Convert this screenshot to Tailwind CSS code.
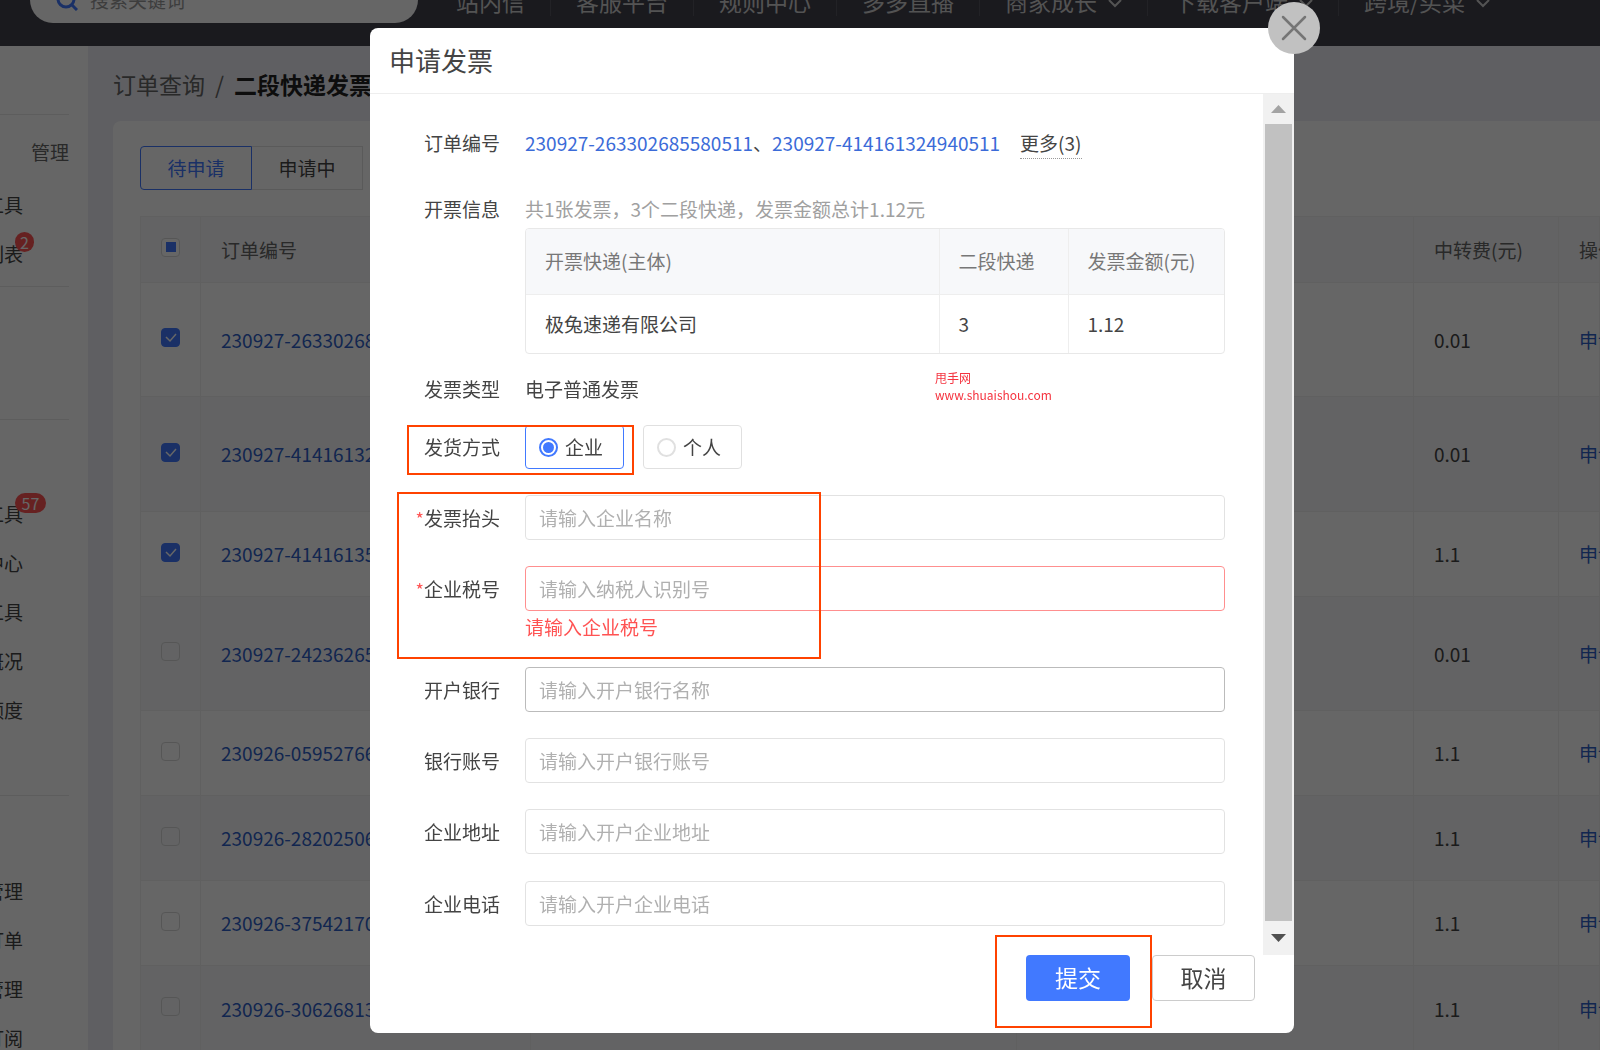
<!DOCTYPE html>
<html lang="zh-CN">
<head>
<meta charset="utf-8">
<meta name="viewport" content="width=device-width, initial-scale=1">
<title>申请发票</title>
<script src="https://cdn.jsdelivr.net/npm/@tailwindcss/browser@4"></script>
</head>
<body class="h-screen overflow-hidden bg-[#eeeef4] font-['Noto_Sans_CJK_SC',sans-serif] text-[19px] leading-[30px] text-[#444]">

<div class="flex h-screen flex-col overflow-hidden">
  <!-- Top bar -->
  <header class="flex h-[46px] shrink-0 items-end overflow-hidden bg-[#41414c] pl-[30px]">
    <label class="mb-[23px] flex h-[46px] w-[388px] shrink-0 items-center gap-[12px] rounded-full bg-white pl-[26px]">
      <svg class="size-[22px] shrink-0" viewBox="0 0 22 22" fill="none" stroke="#4179ff" stroke-width="3"><circle cx="10" cy="10" r="8"/><path d="M15.500 15.500L21 21"/></svg>
      <input type="search" aria-label="搜索" placeholder="搜索关键词" class="min-w-0 flex-1 bg-transparent placeholder:text-[#999]">
    </label>
    <nav class="mb-[30px] ml-[13px] flex shrink-0 text-[23px] text-[#d0d0d0]">
      <a href="#" class="border-r border-[#55555f] px-[25px]">站内信</a>
      <a href="#" class="border-r border-[#55555f] px-[25px]">客服平台</a>
      <a href="#" class="border-r border-[#55555f] px-[25px]">规则中心</a>
      <a href="#" class="border-r border-[#55555f] px-[25px]">多多直播</a>
      <a href="#" class="flex items-center gap-[11px] border-r border-[#55555f] px-[25px]">商家成长
        <svg class="mt-[4px] w-[14px]" viewBox="0 0 14 10" fill="none" stroke="currentColor" stroke-width="2"><path d="M1 2l6 6 6-6"/></svg></a>
      <a href="#" class="flex items-center gap-[11px] border-r border-[#55555f] px-[25px]">下载客户端
        <svg class="mt-[4px] w-[14px]" viewBox="0 0 14 10" fill="none" stroke="currentColor" stroke-width="2"><path d="M1 2l6 6 6-6"/></svg></a>
      <a href="#" class="flex items-center gap-[11px] px-[25px]">跨境/买菜
        <svg class="mt-[4px] w-[14px]" viewBox="0 0 14 10" fill="none" stroke="currentColor" stroke-width="2"><path d="M1 2l6 6 6-6"/></svg></a>
    </nav>
  </header>

  <div class="flex min-h-0 flex-1">
    <!-- Side menu -->
    <aside class="w-[88px] shrink-0 overflow-hidden bg-white pr-[19px] pt-[68px] leading-[49px] whitespace-nowrap">
      <div class="border-t border-[#e8e8e8] pt-[12px] pb-[4px] text-right text-[#666]">管理</div>
      <ul class="flex w-[23px] flex-col items-end pb-[8px]">
        <li><a href="#">营销工具</a></li>
        <li class="relative"><a href="#">活动列表</a><span class="absolute -right-[11px] top-[3px] flex h-[20px] w-[19px] items-center justify-center rounded-full bg-[#ff5353] text-[16px] leading-none text-white">2</span></li>
      </ul>
      <div class="h-[134px] border-y border-[#e8e8e8]"></div>
      <ul class="flex w-[23px] flex-col items-end pt-[69px] pb-[61px]">
        <li class="relative"><a href="#">推广工具</a><span class="absolute -right-[23px] top-[4px] flex h-[20px] w-[31px] items-center justify-center rounded-full bg-[#ff5353] text-[16px] leading-none text-white">57</span></li>
        <li><a href="#">数据中心</a></li>
        <li><a href="#">店铺工具</a></li>
        <li><a href="#">经营概况</a></li>
        <li><a href="#">账户额度</a></li>
      </ul>
      <div class="border-t border-[#e8e8e8]"></div>
      <ul class="flex w-[23px] flex-col items-end pt-[70px]">
        <li><a href="#">商品管理</a></li>
        <li><a href="#">服务订单</a></li>
        <li><a href="#">账号管理</a></li>
        <li><a href="#">消息订阅</a></li>
      </ul>
    </aside>

    <!-- Order list -->
    <main class="min-w-0 flex-1 pl-[25px]">
      <nav class="flex h-[75px] items-center gap-[10px] text-[23px] text-[#666]"><a href="#">订单查询</a><span>/</span><b class="text-[#222]">二段快递发票</b></nav>
      <section class="h-full rounded-tl-lg bg-white pl-[27px] pt-[25px]">
        <div class="flex h-[44px]">
          <button class="w-[112px] rounded-l border border-[#4179ff] text-[#4179ff]">待申请</button>
          <button class="w-[111px] border-y border-r border-[#e0e0e0]">申请中</button>
        </div>
        <table class="mt-[26px] w-full table-fixed border-collapse text-left whitespace-nowrap [&_td]:border [&_td]:border-[#f0f0f0] [&_td]:px-[20px] [&_th]:border [&_th]:border-[#f0f0f0] [&_th]:px-[20px] [&_th]:font-normal [&_th]:text-[#666] [&_input]:block [&_input]:size-[19px] [&_input]:appearance-none [&_input]:rounded-sm [&_input]:border [&_input]:border-[#d8d8d8] [&_input:checked]:border-[#4179ff] [&_input:checked]:bg-[#4179ff] [&_svg]:absolute [&_svg]:inset-0 [&_svg]:size-[19px] [&_label]:relative [&_label]:mb-[4px] [&_label]:block [&_a]:text-[#2f5fc8]">
          <colgroup><col class="w-[60px]"><col class="w-[330px]"><col><col class="w-[397px]"><col class="w-[145px]"><col class="w-[41px]"></colgroup>
          <thead>
            <tr class="h-[66px] bg-[#f7f8fa]"><th><label><input type="checkbox" aria-label="全选" class="bg-white"><span class="absolute left-[5px] top-[4px] size-[10px] bg-[#4179ff]"></span></label></th><th>订单编号</th><th></th><th></th><th>中转费(元)</th><th>操作</th></tr>
          </thead>
          <tbody>
            <tr class="h-[114px]"><td><label><input type="checkbox" checked aria-label="选择订单"><svg viewBox="0 0 19 19" fill="none" stroke="#fff" stroke-width="1.500"><path d="M5 9l4 4 6-7"/></svg></label></td><td><a href="#">230927-26330268</a></td><td></td><td></td><td>0.01</td><td><a href="#">申请</a></td></tr>
            <tr class="h-[115px] bg-[#f7f8fa]"><td><label><input type="checkbox" checked aria-label="选择订单"><svg viewBox="0 0 19 19" fill="none" stroke="#fff" stroke-width="1.500"><path d="M5 9l4 4 6-7"/></svg></label></td><td><a href="#">230927-41416132</a></td><td></td><td></td><td>0.01</td><td><a href="#">申请</a></td></tr>
            <tr class="h-[85px]"><td><label><input type="checkbox" checked aria-label="选择订单"><svg viewBox="0 0 19 19" fill="none" stroke="#fff" stroke-width="1.500"><path d="M5 9l4 4 6-7"/></svg></label></td><td><a href="#">230927-41416135</a></td><td></td><td></td><td>1.1</td><td><a href="#">申请</a></td></tr>
            <tr class="h-[114px] bg-[#f7f8fa]"><td><label><input type="checkbox" aria-label="选择订单"></label></td><td><a href="#">230927-24236265</a></td><td></td><td></td><td>0.01</td><td><a href="#">申请</a></td></tr>
            <tr class="h-[85px]"><td><label><input type="checkbox" aria-label="选择订单"></label></td><td><a href="#">230926-05952766</a></td><td></td><td></td><td>1.1</td><td><a href="#">申请</a></td></tr>
            <tr class="h-[85px] bg-[#f7f8fa]"><td><label><input type="checkbox" aria-label="选择订单"></label></td><td><a href="#">230926-28202506</a></td><td></td><td></td><td>1.1</td><td><a href="#">申请</a></td></tr>
            <tr class="h-[85px]"><td><label><input type="checkbox" aria-label="选择订单"></label></td><td><a href="#">230926-37542170</a></td><td></td><td></td><td>1.1</td><td><a href="#">申请</a></td></tr>
            <tr class="h-[86px] bg-[#f7f8fa]"><td><label><input type="checkbox" aria-label="选择订单"></label></td><td><a href="#">230926-30626813</a></td><td></td><td></td><td>1.1</td><td><a href="#">申请</a></td></tr>
          </tbody>
        </table>
      </section>
    </main>
  </div>
</div>

<!-- Invoice dialog -->
<div class="fixed inset-0 flex items-start justify-center bg-black/60 pt-[28px] pl-[64px]">
  <div role="dialog" aria-labelledby="dialog-title" class="relative flex w-[924px] flex-col rounded-lg bg-white">
    <h1 id="dialog-title" class="flex h-[66px] items-center border-b border-[#eee] px-[19px] pb-[2px] text-[26px]">申请发票</h1>
    <div class="flex">
      <form id="invoice" class="flex flex-1 flex-col pt-[34px] pr-[38px] pb-[29px]">
        <div class="flex gap-[25px]">
          <span class="w-[130px] text-right">订单编号</span>
          <div class="flex"><a href="#" class="text-[#3b6bd8]">230927-263302685580511</a>、<a href="#" class="text-[#3b6bd8]">230927-414161324940511</a><a href="#" class="ml-[20px] border-b border-dotted border-[#999]">更多(3)</a></div>
        </div>
        <div class="mt-[35px] flex gap-[25px]">
          <span class="w-[130px] text-right">开票信息</span>
          <div class="flex-1">
            <p class="text-[#a0a0a0]">共1张发票，3个二段快递，发票金额总计1.12元</p>
            <div class="mt-[4px] overflow-hidden rounded border border-[#e8e8e8]">
              <table class="w-full table-fixed text-left">
                <colgroup><col><col class="w-[129px]"><col class="w-[156px]"></colgroup>
                <thead><tr class="h-[65px] border-b border-[#eee] bg-[#f7f8fa] text-[#777]"><th class="px-[19px] font-normal">开票快递(主体)</th><th class="border-l border-[#eee] px-[19px] font-normal">二段快递</th><th class="border-l border-[#eee] px-[19px] font-normal">发票金额(元)</th></tr></thead>
                <tbody><tr class="h-[59px]"><td class="px-[19px]">极兔速递有限公司</td><td class="border-l border-[#eee] px-[19px]">3</td><td class="border-l border-[#eee] px-[19px]">1.12</td></tr></tbody>
              </table>
            </div>
          </div>
        </div>
        <div class="mt-[20px] flex gap-[25px]"><span class="w-[130px] text-right">发票类型</span><span>电子普通发票</span></div>
        <div role="radiogroup" aria-labelledby="mode" class="mt-[21px] flex items-center gap-[25px]">
          <span id="mode" class="w-[130px] text-right">发货方式</span>
          <div class="flex gap-[19px]">
            <label class="flex h-[44px] w-[99px] items-center gap-[7px] rounded border border-[#4179ff] pl-[13px]"><input type="radio" name="kind" checked class="size-[19px] appearance-none rounded-full border-2 border-[#4179ff] p-[2px] checked:bg-[#4179ff] bg-clip-content">企业</label>
            <label class="flex h-[44px] w-[99px] items-center gap-[7px] rounded border border-[#e0e0e0] pl-[13px]"><input type="radio" name="kind" class="size-[19px] appearance-none rounded-full border-2 border-[#e0e0e0]">个人</label>
          </div>
        </div>
        <div class="mt-[26px] flex items-center gap-[25px]"><label for="f1" class="w-[130px] text-right"><span class="text-[18px] leading-none text-[#ff5353]">*</span>发票抬头</label><input id="f1" placeholder="请输入企业名称" class="h-[45px] min-w-0 flex-1 rounded border border-[#e2e2e2] px-[13px] placeholder:text-[#b0b0b0]"></div>
        <div class="mt-[26px] flex items-center gap-[25px]"><label for="f2" class="w-[130px] text-right"><span class="text-[18px] leading-none text-[#ff5353]">*</span>企业税号</label><input id="f2" placeholder="请输入纳税人识别号" aria-describedby="f2-error" class="h-[45px] min-w-0 flex-1 rounded border border-[#ff8f8f] px-[13px] placeholder:text-[#b0b0b0]"></div>
        <p id="f2-error" class="mt-px pl-[155px] text-[#ff5353]">请输入企业税号</p>
        <div class="mt-[25px] flex items-center gap-[25px]"><label for="f3" class="w-[130px] text-right">开户银行</label><input id="f3" placeholder="请输入开户银行名称" class="h-[45px] min-w-0 flex-1 rounded border border-[#bbb] px-[13px] placeholder:text-[#b0b0b0]"></div>
        <div class="mt-[26px] flex items-center gap-[25px]"><label for="f4" class="w-[130px] text-right">银行账号</label><input id="f4" placeholder="请输入开户银行账号" class="h-[45px] min-w-0 flex-1 rounded border border-[#e2e2e2] px-[13px] placeholder:text-[#b0b0b0]"></div>
        <div class="mt-[26px] flex items-center gap-[25px]"><label for="f5" class="w-[130px] text-right">企业地址</label><input id="f5" placeholder="请输入开户企业地址" class="h-[45px] min-w-0 flex-1 rounded border border-[#e2e2e2] px-[13px] placeholder:text-[#b0b0b0]"></div>
        <div class="mt-[27px] flex items-center gap-[25px]"><label for="f6" class="w-[130px] text-right">企业电话</label><input id="f6" placeholder="请输入开户企业电话" class="h-[45px] min-w-0 flex-1 rounded border border-[#e2e2e2] px-[13px] placeholder:text-[#b0b0b0]"></div>
      </form>
      <!-- Scroll bar -->
      <div class="flex w-[31px] flex-col items-center bg-[#f1f1f1]">
        <div class="flex h-[30px] items-center"><svg class="w-[15px]" viewBox="0 0 15 8"><path d="M7.500 0L15 8H0z" fill="#a3a3a3"/></svg></div>
        <div class="w-[27px] flex-1 bg-[#c1c1c1]"></div>
        <div class="flex h-[34px] items-center"><svg class="w-[15px]" viewBox="0 0 15 8"><path d="M0 0h15L7.500 8z" fill="#505050"/></svg></div>
      </div>
    </div>
    <div class="flex justify-end gap-[22px] pr-[39px] pb-[32px] text-[23px]">
      <button type="submit" form="invoice" class="h-[46px] w-[104px] rounded bg-[#4179ff] pb-[2px] text-white">提交</button>
      <button type="button" class="h-[46px] w-[103px] rounded border border-[#ccc] pb-[2px]">取消</button>
    </div>

    <button type="button" aria-label="关闭" class="absolute -top-[26px] -right-[26px] flex size-[52px] items-center justify-center rounded-full bg-[#c1c1c1]"><svg class="size-[26px]" viewBox="0 0 26 26" fill="none" stroke="#757575" stroke-width="2.500" stroke-linecap="round"><path d="M2 2l22 22M24 2L2 24"/></svg></button>

    <!-- Watermark and highlight frames -->
    <p class="absolute top-[341px] left-[565px] text-[12px] leading-[17px] text-[#f5333f]">甩手网<br>www.shuaishou.com</p>
    <div class="pointer-events-none absolute top-[397px] left-[37px] h-[50px] w-[227px] border-2 border-[#ff4200]"></div>
    <div class="pointer-events-none absolute top-[464px] left-[27px] h-[167px] w-[424px] border-2 border-[#ff4200]"></div>
    <div class="pointer-events-none absolute top-[907px] left-[625px] h-[93px] w-[157px] border-2 border-[#ff4200]"></div>
  </div>
</div>
</body>
</html>
